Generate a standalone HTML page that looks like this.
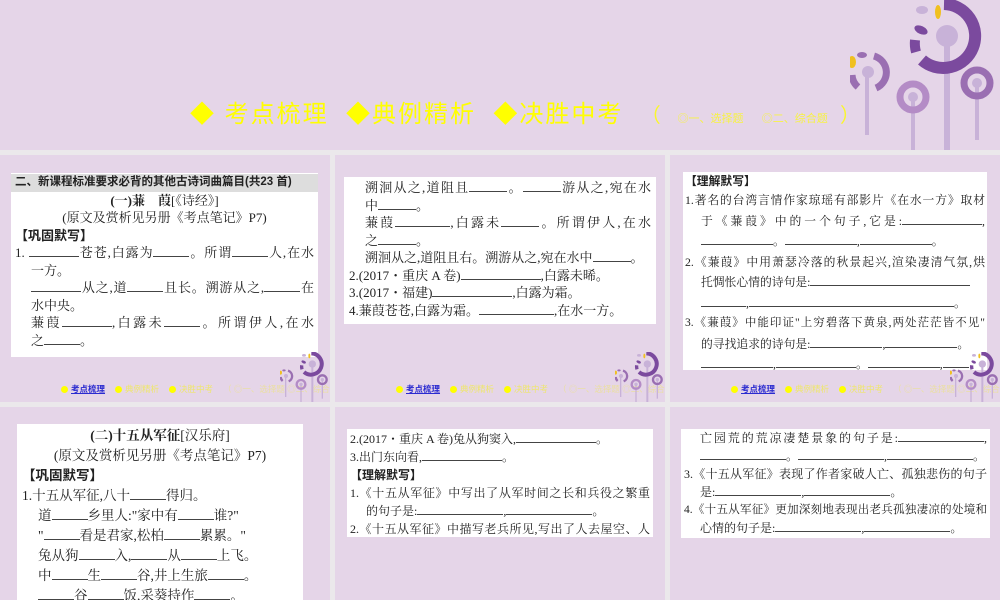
<!DOCTYPE html>
<html><head><meta charset="utf-8"><style>
*{margin:0;padding:0;box-sizing:border-box}
body{width:1000px;height:600px;overflow:hidden;background:#ebe8eb;position:relative;font-family:"Liberation Serif","Noto Serif CJK SC",serif;color:#222}
.t{position:absolute;background:#e5d5e8;overflow:hidden}
.w{position:absolute;background:#fff;font-size:13px;line-height:17.5px;padding:2px 5px;white-space:nowrap;overflow:hidden}
.w div{overflow:hidden;white-space:nowrap}
.j{text-align:justify;text-align-last:justify;white-space:normal!important;height:1lh}
.b{display:inline-block;border-bottom:1px solid #444;height:12px;vertical-align:baseline}
.h{font-family:"Liberation Sans","Noto Sans CJK SC",sans-serif;font-weight:bold}
.c{text-align:center}
.i{padding-left:16px}
.nav{position:absolute;left:61px;top:228px;font-family:"Liberation Sans","Noto Sans CJK SC",sans-serif;font-size:8.5px;color:#f0e860;white-space:nowrap}
.nav .d{display:inline-block;width:7px;height:7px;border-radius:50%;background:#ffff00;margin-right:3px;vertical-align:middle}
.nav a{color:#2a2ad0;text-decoration:underline;font-weight:bold;margin-right:10px}
.nav span.x{margin-right:10px;opacity:.9}
svg.f{position:absolute}
</style></head><body>
<svg width="0" height="0" style="position:absolute"><defs>
<symbol id="fl" viewBox="850 0 150 150">
<rect x="944" y="40" width="6" height="110" fill="#c8b2d8"/>
<path d="M944 4 A32 32 0 1 1 922 60" fill="none" stroke="#7b4a9e" stroke-width="12"/>
<path d="M916 52 A32 32 0 0 1 915 40" fill="none" stroke="#7b4a9e" stroke-width="10"/>
<ellipse cx="921" cy="30" rx="7" ry="4" fill="#7b4a9e" transform="rotate(25 921 30)"/>
<ellipse cx="938" cy="12" rx="3" ry="7" fill="#f0c020"/>
<ellipse cx="922" cy="10" rx="6" ry="4" fill="#c8b2d8"/>
<circle cx="947" cy="36" r="11" fill="#c8b2d8"/>
<rect x="865" y="70" width="4" height="65" fill="#c8b2d8"/>
<path d="M874 56 A17 17 0 0 1 876 88" fill="none" stroke="#9a6fb2" stroke-width="7"/>
<path d="M858 87 A17 17 0 0 1 852 75" fill="none" stroke="#9a6fb2" stroke-width="7"/>
<circle cx="868" cy="72" r="6" fill="#c8b2d8"/>
<ellipse cx="852" cy="62" rx="4" ry="6" fill="#f0c020"/>
<ellipse cx="862" cy="55" rx="5" ry="3" fill="#9a6fb2"/>
<rect x="911" y="97" width="4" height="53" fill="#c8b2d8"/>
<circle cx="913" cy="97" r="13" fill="none" stroke="#b48cc6" stroke-width="7"/>
<circle cx="913" cy="97" r="5" fill="#c8b2d8"/>
<rect x="975" y="85" width="4" height="55" fill="#c8b2d8"/>
<circle cx="977" cy="83" r="13" fill="none" stroke="#9a6fb2" stroke-width="7"/>
<circle cx="977" cy="83" r="5" fill="#c8b2d8"/>
</symbol></defs></svg>

<div class="t" style="left:0;top:0;width:1000px;height:150px"></div>
<div style="position:absolute;left:190px;top:94px;font-family:'Liberation Sans','Noto Sans CJK SC',sans-serif;font-size:24px;color:#ffff00;white-space:nowrap;letter-spacing:2px">◆ 考点梳理 &nbsp;◆典例精析 &nbsp;◆决胜中考 &nbsp;<span style="font-size:20px;opacity:.8">（</span> <span style="font-size:11px;opacity:.7;letter-spacing:0">&nbsp;&nbsp;◎一、选择题 &nbsp;&nbsp;&nbsp;&nbsp;&nbsp;◎二、综合题 &nbsp;&nbsp;&nbsp;</span><span style="font-size:20px;opacity:.8">）</span></div>
<svg class="f" style="left:850px;top:0" width="150" height="150"><use href="#fl"/></svg>

<div class="t" style="left:0;top:155px;width:330px;height:247px"><div class="nav"><span class="d"></span><a>考点梳理</a><span class="d"></span><span class="x">典例精析</span><span class="d"></span><span class="x">决胜中考</span><span class="x" style="opacity:.5">（ ◎一、选择题 ◎二、综合题 ）</span></div></div>
<div class="t" style="left:335px;top:155px;width:330px;height:247px"><div class="nav"><span class="d"></span><a>考点梳理</a><span class="d"></span><span class="x">典例精析</span><span class="d"></span><span class="x">决胜中考</span><span class="x" style="opacity:.5">（ ◎一、选择题 ◎二、综合题 ）</span></div></div>
<div class="t" style="left:670px;top:155px;width:330px;height:247px"><div class="nav"><span class="d"></span><a>考点梳理</a><span class="d"></span><span class="x">典例精析</span><span class="d"></span><span class="x">决胜中考</span><span class="x" style="opacity:.5">（ ◎一、选择题 ◎二、综合题 ）</span></div></div>
<div class="t" style="left:0;top:407px;width:330px;height:193px"></div>
<div class="t" style="left:335px;top:407px;width:330px;height:193px"></div>
<div class="t" style="left:670px;top:407px;width:330px;height:193px"></div>

<div class="w" style="left:11px;top:173px;width:307px;height:184px;padding:1px 4px">
<div class="h" style="font-size:11.5px;background:#ddd;margin:0 -4px;padding-left:4px">二、新课程标准要求必背的其他古诗词曲篇目(共23 首)</div>
<div class="c"><b>(一)蒹　葭</b>[《诗经》]</div>
<div class="c">(原文及赏析见另册《考点笔记》P7)</div>
<div class="h">【巩固默写】</div>
<div class="j">1. <span class="b" style="width:50px"></span>苍苍,白露为<span class="b" style="width:36px"></span>。所谓<span class="b" style="width:36px"></span>人,在水</div>
<div class="i">一方。</div>
<div class="i j"><span class="b" style="width:50px"></span>从之,道<span class="b" style="width:36px"></span>且长。溯游从之,<span class="b" style="width:36px"></span>在</div>
<div class="i">水中央。</div>
<div class="i j">蒹葭<span class="b" style="width:50px"></span>,白露未<span class="b" style="width:36px"></span>。所谓伊人,在水</div>
<div class="i">之<span class="b" style="width:36px"></span>。</div>
</div>

<div class="w" style="left:344px;top:177px;width:312px;height:147px">
<div class="i j">溯洄从之,道阻且<span class="b" style="width:38px"></span>。<span class="b" style="width:38px"></span>游从之,宛在水</div>
<div class="i">中<span class="b" style="width:38px"></span>。</div>
<div class="i j">蒹葭<span class="b" style="width:55px"></span>,白露未<span class="b" style="width:38px"></span>。所谓伊人,在水</div>
<div class="i">之<span class="b" style="width:38px"></span>。</div>
<div class="i">溯洄从之,道阻且右。溯游从之,宛在水中<span class="b" style="width:38px"></span>。</div>
<div>2.(2017・重庆 A 卷)<span class="b" style="width:80px"></span>,白露未晞。</div>
<div>3.(2017・福建)<span class="b" style="width:80px"></span>,白露为霜。</div>
<div>4.蒹葭苍苍,白露为霜。<span class="b" style="width:75px"></span>,在水一方。</div>
</div>

<div class="w" style="left:683px;top:172px;width:304px;height:198px;line-height:20.5px;padding:0 2px;font-size:11.8px">
<div class="h" style="line-height:18px">【理解默写】</div>
<div class="j">1.著名的台湾言情作家琼瑶有部影片《在水一方》取材</div>
<div class="i j">于《蒹葭》中的一个句子,它是:<span class="b" style="width:80px"></span>,</div>
<div class="i"><span class="b" style="width:72px"></span>。<span class="b" style="width:72px"></span>,<span class="b" style="width:72px"></span>。</div>
<div class="j">2.《蒹葭》中用萧瑟冷落的秋景起兴,渲染凄清气氛,烘</div>
<div class="i">托惆怅心情的诗句是:<span class="b" style="width:160px"></span></div>
<div class="i"><span class="b" style="width:45px"></span>,<span class="b" style="width:205px"></span>。</div>
<div class="j" style="font-size:11.5px">3.《蒹葭》中能印证"上穷碧落下黄泉,两处茫茫皆不见"</div>
<div class="i">的寻找追求的诗句是:<span class="b" style="width:72px"></span>,<span class="b" style="width:72px"></span>。</div>
<div class="i"><span class="b" style="width:72px"></span>,<span class="b" style="width:80px"></span>。<span class="b" style="width:72px"></span>,<span class="b" style="width:26px"></span></div>
<div class="i"><span class="b" style="width:52px"></span>。<span class="b" style="width:72px"></span>,<span class="b" style="width:86px"></span>。</div>
</div>

<div class="w" style="left:17px;top:424px;width:286px;height:176px;line-height:20px;font-size:13.5px">
<div class="c"><b>(二)十五从军征</b>[汉乐府]</div>
<div class="c">(原文及赏析见另册《考点笔记》P7)</div>
<div class="h">【巩固默写】</div>
<div>1.十五从军征,八十<span class="b" style="width:36px"></span>得归。</div>
<div class="i">道<span class="b" style="width:36px"></span>乡里人:"家中有<span class="b" style="width:36px"></span>谁?"</div>
<div class="i">"<span class="b" style="width:36px"></span>看是君家,松柏<span class="b" style="width:36px"></span>累累。"</div>
<div class="i">兔从狗<span class="b" style="width:36px"></span>入,<span class="b" style="width:36px"></span>从<span class="b" style="width:36px"></span>上飞。</div>
<div class="i">中<span class="b" style="width:36px"></span>生<span class="b" style="width:36px"></span>谷,井上生旅<span class="b" style="width:36px"></span>。</div>
<div class="i"><span class="b" style="width:36px"></span>谷<span class="b" style="width:36px"></span>饭,采葵持作<span class="b" style="width:36px"></span>。</div>
<div class="i">羹饭一时<span class="b" style="width:36px"></span>,不知<span class="b" style="width:36px"></span>阿谁。</div>
</div>

<div class="w" style="left:347px;top:429px;width:306px;height:108px;line-height:18px;padding:1px 3px;font-size:12px">
<div>2.(2017・重庆 A 卷)兔从狗窦入,<span class="b" style="width:80px"></span>。</div>
<div>3.出门东向看,<span class="b" style="width:80px"></span>。</div>
<div class="h">【理解默写】</div>
<div class="j">1.《十五从军征》中写出了从军时间之长和兵役之繁重</div>
<div class="i">的句子是:<span class="b" style="width:86px"></span>,<span class="b" style="width:86px"></span>。</div>
<div class="j">2.《十五从军征》中描写老兵所见,写出了人去屋空、人</div>
</div>

<div class="w" style="left:681px;top:429px;width:309px;height:109px;line-height:18px;padding:0 3px;font-size:12px">
<div class="i j">亡园荒的荒凉凄楚景象的句子是:<span class="b" style="width:86px"></span>,</div>
<div class="i"><span class="b" style="width:86px"></span>。<span class="b" style="width:86px"></span>,<span class="b" style="width:86px"></span>。</div>
<div class="j">3.《十五从军征》表现了作者家破人亡、孤独悲伤的句子</div>
<div class="i">是:<span class="b" style="width:86px"></span>,<span class="b" style="width:86px"></span>。</div>
<div class="j" style="font-size:11.5px">4.《十五从军征》更加深刻地表现出老兵孤独凄凉的处境和</div>
<div class="i">心情的句子是:<span class="b" style="width:86px"></span>,<span class="b" style="width:86px"></span>。</div>
</div>

<svg class="f" style="left:280px;top:352px" width="50" height="50"><use href="#fl"/></svg>
<svg class="f" style="left:615px;top:352px" width="50" height="50"><use href="#fl"/></svg>
<svg class="f" style="left:950px;top:352px" width="50" height="50"><use href="#fl"/></svg>
</body></html>
